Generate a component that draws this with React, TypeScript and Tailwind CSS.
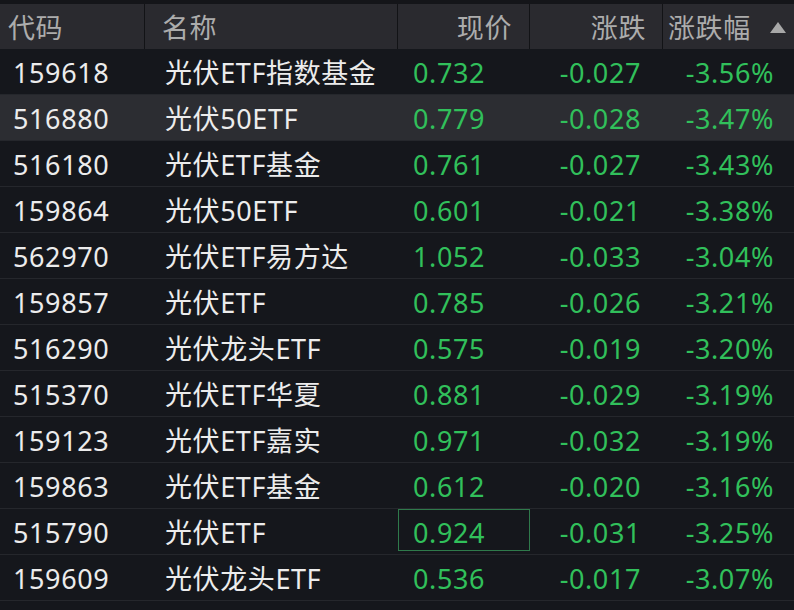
import React from 'react';

type Row = {
  code: string;
  name: string;
  price: string;
  change: string;
  pct: string;
};

const rows: Row[] = [
  { code: '159618', name: '光伏ETF指数基金', price: '0.732', change: '-0.027', pct: '-3.56%' },
  { code: '516880', name: '光伏50ETF', price: '0.779', change: '-0.028', pct: '-3.47%' },
  { code: '516180', name: '光伏ETF基金', price: '0.761', change: '-0.027', pct: '-3.43%' },
  { code: '159864', name: '光伏50ETF', price: '0.601', change: '-0.021', pct: '-3.38%' },
  { code: '562970', name: '光伏ETF易方达', price: '1.052', change: '-0.033', pct: '-3.04%' },
  { code: '159857', name: '光伏ETF', price: '0.785', change: '-0.026', pct: '-3.21%' },
  { code: '516290', name: '光伏龙头ETF', price: '0.575', change: '-0.019', pct: '-3.20%' },
  { code: '515370', name: '光伏ETF华夏', price: '0.881', change: '-0.029', pct: '-3.19%' },
  { code: '159123', name: '光伏ETF嘉实', price: '0.971', change: '-0.032', pct: '-3.19%' },
  { code: '159863', name: '光伏ETF基金', price: '0.612', change: '-0.020', pct: '-3.16%' },
  { code: '515790', name: '光伏ETF', price: '0.924', change: '-0.031', pct: '-3.25%' },
  { code: '159609', name: '光伏龙头ETF', price: '0.536', change: '-0.017', pct: '-3.07%' },
];

const HIGHLIGHT = 1;
const BOXED = 10;

export default function App() {
  return (
    <div
      className="w-[794px] h-[610px] overflow-hidden bg-[#15171c] text-[27px] leading-none tracking-[0.6px]"
      style={{ fontFamily: "'Noto Sans', 'Noto Sans CJK SC', sans-serif" }}
    >
      <div className="h-[4px] bg-[#141519]" />
      <div className="grid grid-cols-[145px_253px_132px_133px_131px] h-[45px] bg-[#2a2a2f] text-[#acacac]">
        <div className="flex items-center pl-[8px] pt-[2px] border-r border-[#121316]">代码</div>
        <div className="flex items-center pl-[17px] pt-[2px] border-r border-[#121316]">名称</div>
        <div className="flex items-center justify-end pr-[17px] pt-[2px] border-r border-[#121316]">现价</div>
        <div className="flex items-center justify-end pr-[16px] pt-[2px] border-r border-[#121316]">涨跌</div>
        <div className="flex items-center pl-[5px] pt-[2px]">
          <span>涨跌幅</span>
          <svg className="ml-[19px]" width="16" height="11" viewBox="0 0 16 11">
            <polygon points="8,0 16,11 0,11" fill="#a8a8a8" />
          </svg>
        </div>
      </div>
      {rows.map((r, i) => (
        <div
          key={r.code + i}
          className={`grid grid-cols-[145px_253px_132px_133px_131px] h-[46px] border-b border-[#25272c] ${
            i === HIGHLIGHT ? 'bg-[#2c2d32]' : 'bg-[#15171c]'
          }`}
        >
          <div className="flex items-center pl-[13px] pt-[2px] text-[#ececec]">{r.code}</div>
          <div className="flex items-center pl-[20px] pt-[2px] text-[#ececec]">{r.name}</div>
          <div className="flex items-start">
            {i === BOXED ? (
              <div className="flex items-center w-[132px] h-[42px] pl-[14px] pt-[4px] border border-[#2f7a4b] text-[#31c05b]">
                {r.price}
              </div>
            ) : (
              <div className="flex items-center h-full pl-[15px] pt-[2px] text-[#31c05b]">{r.price}</div>
            )}
          </div>
          <div className="flex items-center justify-end pr-[22px] pt-[2px] text-[#31c05b]">{r.change}</div>
          <div className="flex items-center justify-end pr-[20px] pt-[2px] text-[#31c05b]">{r.pct}</div>
        </div>
      ))}
    </div>
  );
}
